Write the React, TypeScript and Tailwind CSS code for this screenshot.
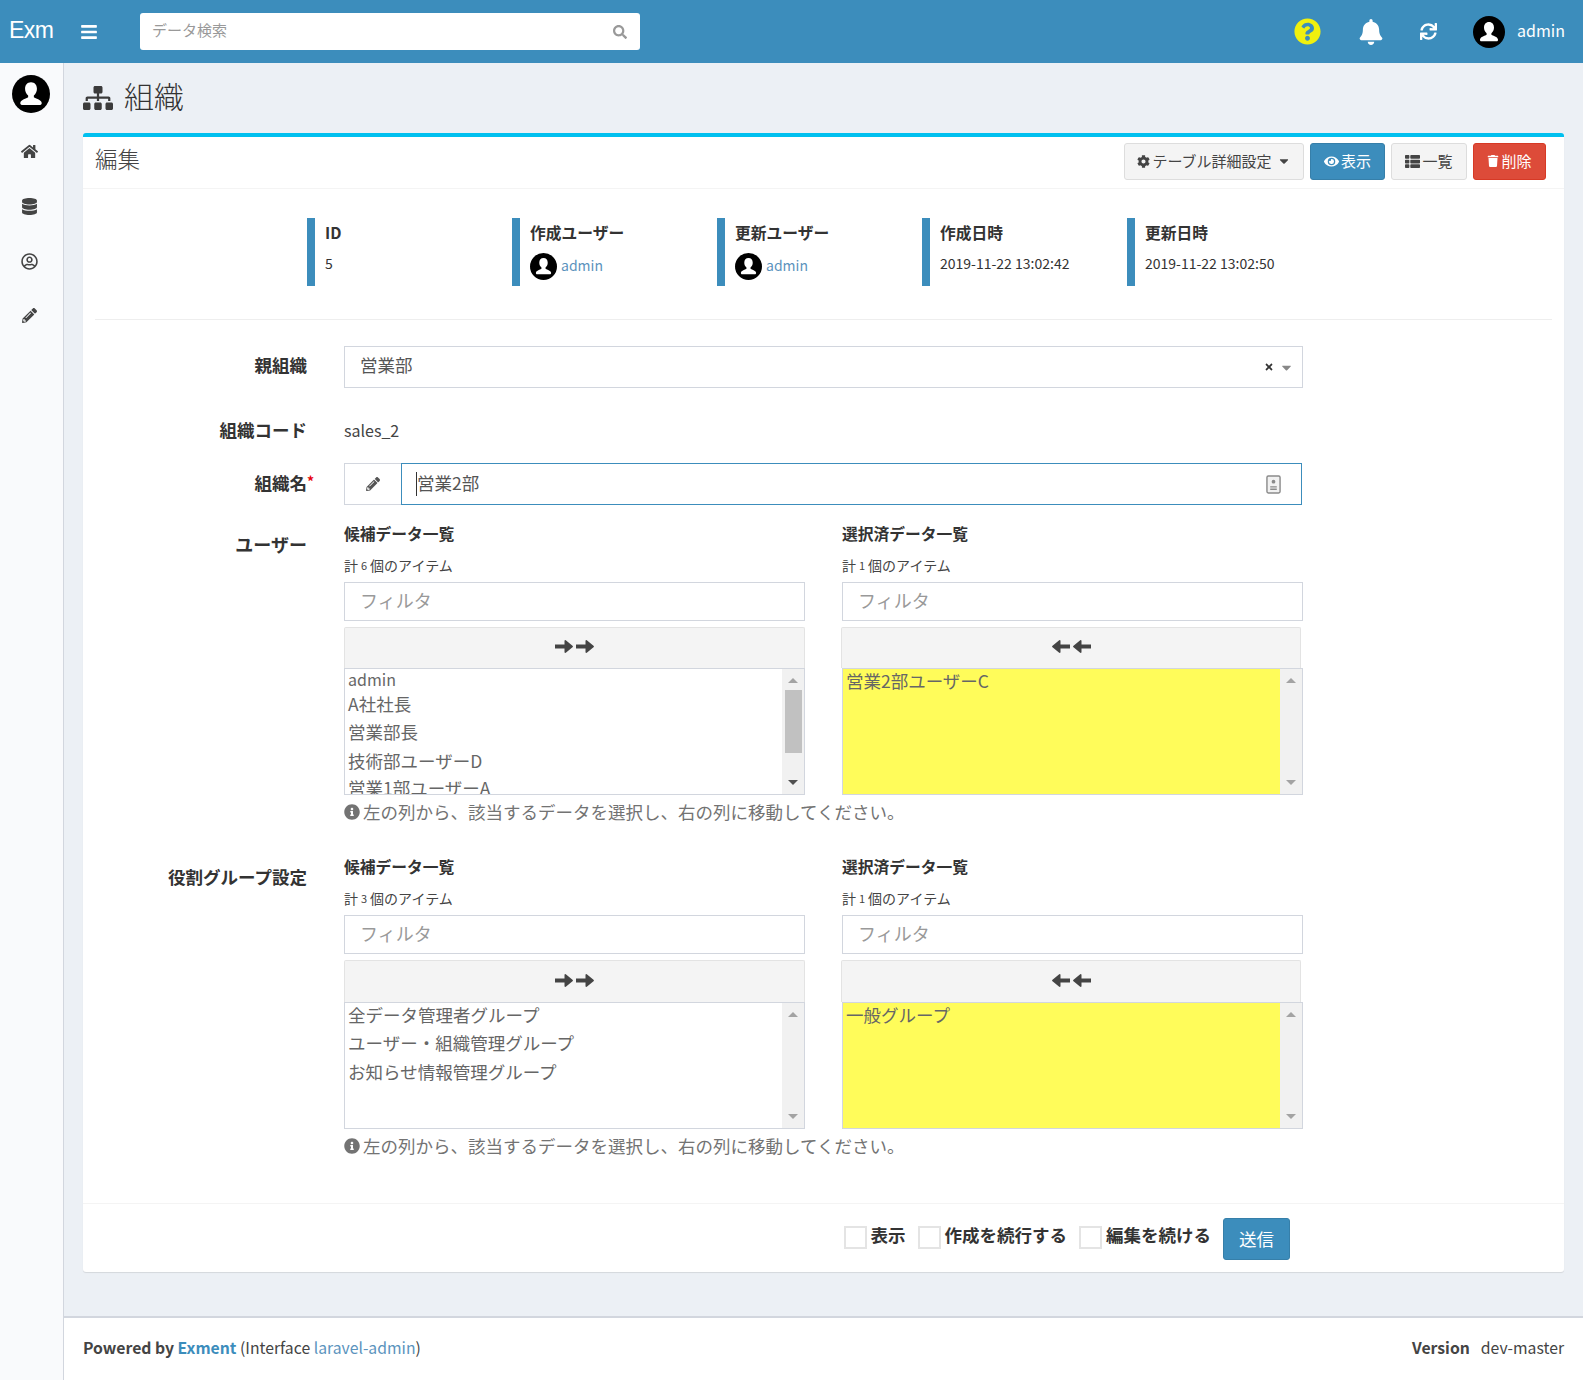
import {
  FaBars,
  FaBell,
  FaCaretDown,
  FaCog,
  FaDatabase,
  FaEye,
  FaHome,
  FaInfoCircle,
  FaPencilAlt,
  FaQuestionCircle,
  FaRegUserCircle,
  FaSearch,
  FaSitemap,
  FaSync,
  FaThList,
  FaTimes,
  FaTrash,
} from "react-icons/fa";

function Avatar({ size }: { size: number }) {
  return (
    <svg viewBox="0 0 32 32" width={size} height={size} className="shrink-0">
      <circle cx="16" cy="16" r="16" fill="#000" />
      <path
        d="M16 6c-3.2 0-5 2.4-5 5.6 0 2.4 1 4.4 2.6 5.6v1.6c-1.6 1.2-6 1.8-6.6 4.6-.2 1 .4 1.8 1.4 1.8h15.2c1 0 1.6-.8 1.4-1.8-.6-2.8-5-3.4-6.6-4.6v-1.6c1.6-1.2 2.6-3.2 2.6-5.6C21 8.400 19.200 6 16 6z"
        fill="#fff"
      />
    </svg>
  );
}

function Arrow({ left }: { left?: boolean }) {
  return (
    <svg viewBox="0 0 18 13" width="18" height="13" className={left ? "rotate-180 fill-[#444]" : "fill-[#444]"}>
      <path d="M0 4.500h9.500V.5L10.500 0 17.500 5.700c.6.500.6 1.100 0 1.600L10.500 13 9.500 12.500v-4H0z" />
    </svg>
  );
}

function InfoItem({ label, children }: { label: string; children: React.ReactNode }) {
  return (
    <div className="flex h-[68px] w-[205px] border-l-[8px] border-[#3c8dbc] pl-[10px]">
      <div className="flex flex-col">
        <div className="mt-[3px] h-[24px] text-[15.75px] leading-[24px] font-bold text-[#333]">{label}</div>
        <div className="mt-[6px] flex h-[30px] items-center text-[14px] text-[#333]">{children}</div>
      </div>
    </div>
  );
}

function AdminLink() {
  return (
    <span className="flex items-center gap-[4px] text-[14px] text-[#5b93bd]">
      <Avatar size={27} />
      <span className="pb-[2px]">admin</span>
    </span>
  );
}

function Scrollbar({ thumb }: { thumb?: boolean }) {
  return (
    <div className="flex w-[22px] shrink-0 flex-col items-center justify-between bg-[#f1f1f1] py-[9px]">
      <div className="h-0 w-0 border-x-[5px] border-b-[5px] border-x-transparent border-b-[#a3a3a3]" />
      {thumb ? <div className="mt-[7px] mb-auto h-[63px] w-[17px] bg-[#c1c1c1]" /> : null}
      <div
        className={
          thumb
            ? "h-0 w-0 border-x-[5px] border-t-[5px] border-x-transparent border-t-[#505050]"
            : "h-0 w-0 border-x-[5px] border-t-[5px] border-x-transparent border-t-[#a3a3a3]"
        }
      />
    </div>
  );
}

type Row = { text: string; h: number };

function DualList({
  title,
  count,
  rows,
  selected,
  thumb,
  tall,
}: {
  title: string;
  count: number;
  rows: Row[];
  selected?: boolean;
  thumb?: boolean;
  tall?: boolean;
}) {
  return (
    <div className="w-[461px]">
      <div className="h-[26px] text-[15.75px] leading-[26px] font-bold text-[#333]">{title}</div>
      <div className="mt-[3px] flex h-[30px] items-center gap-[3px] text-[14px] text-[#444]">
        <span>計</span>
        <span className="text-[11px]">{count}</span>
        <span>個のアイテム</span>
      </div>
      <div className="mt-[2px] flex h-[39px] items-center border border-[#d2d6de] pb-[2px] pl-[15px] text-[18px] text-[#999]">
        フィルタ
      </div>
      <div
        className={
          "mt-[6px] flex items-center justify-center gap-[3px] rounded-t-[2px] border border-b-0 border-[#e3e3e3] bg-[#f4f4f4] pb-[3px] " +
          (tall ? "h-[42px] " : "h-[41px] ") +
          (selected ? "-ml-[1px] w-[460px]" : "")
        }
      >
        <Arrow left={selected} />
        <Arrow left={selected} />
      </div>
      <div className="flex h-[127px] overflow-hidden border border-[#d2d6de]">
        <div
          className={
            selected
              ? "flex-1 overflow-hidden bg-[#fffc5a] px-[3px] text-[17.5px] text-[#666]"
              : "flex-1 overflow-hidden px-[3px] text-[17.5px] text-[#666]"
          }
        >
          {rows.map((row) => (
            <div
              key={row.text}
              className={row.text === "admin" ? "whitespace-nowrap text-[16px]" : "whitespace-nowrap"}
              style={{ height: row.h, lineHeight: `${row.h}px` }}
            >
              {row.text}
            </div>
          ))}
        </div>
        <Scrollbar thumb={thumb} />
      </div>
    </div>
  );
}

function HelpText() {
  return (
    <div className="mt-[7px] flex h-[20px] items-center gap-[3px] text-[17.500px] text-[#737373]">
      <FaInfoCircle size={16} />
      左の列から、該当するデータを選択し、右の列に移動してください。
    </div>
  );
}

function CheckLabel({ label }: { label: string }) {
  return (
    <label className="flex items-center gap-[4px] text-[17.5px] font-bold text-[#333]">
      <span className="-mt-[2px] h-[23px] w-[23px] border-2 border-[#e4e4e4] bg-white" />
      <span className="-mt-[6px]">{label}</span>
    </label>
  );
}

export default function App() {
  return (
    <div className="flex min-h-screen flex-col font-['Noto_Sans_CJK_JP','Noto_Sans',sans-serif] text-[#333]">
      <header className="flex h-[63px] items-center bg-[#3c8dbc] text-white">
        <div className="ml-[9px] w-[71px] pb-[2px] font-['Liberation_Sans',sans-serif] text-[23px] tracking-[-0.5px]">
          Exm
        </div>
        <FaBars size={18} />
        <div className="ml-[42px] flex h-[37px] w-[500px] items-center justify-between rounded-[3px] bg-white px-[12px] text-[15px] text-[#999]">
          <span className="pb-[2px]">データ検索</span>
          <FaSearch size={14} className="mr-[1px]" />
        </div>
        <div className="ml-auto flex items-center">
          <FaQuestionCircle size={27} className="text-[#f0f00e]" />
          <FaBell size={26} className="ml-[37px]" />
          <FaSync size={17} className="ml-[36px]" />
          <span className="ml-[36px]">
            <Avatar size={32} />
          </span>
          <span className="ml-[12px] mr-[18px] pb-[3px] text-[16px]">admin</span>
        </div>
      </header>

      <div className="flex flex-1">
        <aside className="flex w-[64px] shrink-0 flex-col items-center border-r border-[#d2d6de] bg-[#f9fafc] text-[#444]">
          <div className="mt-[12px] -ml-[1px]">
            <Avatar size={38} />
          </div>
          <div className="mt-[30px] -ml-[4px] flex flex-col items-center gap-[38px]">
            <FaHome size={17} />
            <FaDatabase size={17} />
            <FaRegUserCircle size={17} />
            <FaPencilAlt size={15} />
          </div>
        </aside>

        <main className="flex min-w-0 flex-1 flex-col">
          <div className="flex-1 bg-[#ecf0f5] px-[19px] pb-[42px]">
            <div className="flex h-[70px] items-center text-[#333]">
              <FaSitemap size={30} className="text-[#3b3b3b]" />
              <h1 className="ml-[11px] -mt-[6px] text-[30px] font-light">組織</h1>
            </div>

            <div className="rounded-[3px] border-t-4 border-[#00c0ef] bg-white shadow-[0_1px_1px_rgba(0,0,0,0.1)]">
              <div className="flex h-[52px] items-center border-b border-[#f4f4f4] pl-[12px] pr-[18px]">
                <h2 className="pb-[7px] text-[22.5px] font-light text-[#444]">編集</h2>
                <div className="mb-[3px] ml-auto flex h-[37px] gap-[6px] text-[15px]">
                  <button className="flex w-[180px] items-center justify-center gap-[2px] rounded-[3px] border border-[#ddd] bg-[#f4f4f4] text-[#444]">
                    <FaCog size={13} />
                    テーブル詳細設定
                    <FaCaretDown size={14} className="ml-[3px]" />
                  </button>
                  <button className="flex w-[75px] items-center justify-center gap-[2px] rounded-[3px] border border-[#367fa9] bg-[#3c8dbc] text-white">
                    <FaEye size={15} />
                    表示
                  </button>
                  <button className="flex w-[76px] items-center justify-center gap-[2px] rounded-[3px] border border-[#ddd] bg-[#f4f4f4] text-[#444]">
                    <FaThList size={15} />
                    一覧
                  </button>
                  <button className="flex w-[73px] items-center justify-center gap-[2px] rounded-[3px] border border-[#d73925] bg-[#dd4b39] text-white">
                    <FaTrash size={12} />
                    削除
                  </button>
                </div>
              </div>

              <div className="px-[12px]">
                <div className="mt-[29px] flex border-b border-[#eee] pb-[33px] pl-[212px]">
                  <InfoItem label="ID">
                    <span className="mb-[6px]">5</span>
                  </InfoItem>
                  <InfoItem label="作成ユーザー">
                    <AdminLink />
                  </InfoItem>
                  <InfoItem label="更新ユーザー">
                    <AdminLink />
                  </InfoItem>
                  <InfoItem label="作成日時">
                    <span className="mb-[6px]">2019-11-22 13:02:42</span>
                  </InfoItem>
                  <InfoItem label="更新日時">
                    <span className="mb-[6px]">2019-11-22 13:02:50</span>
                  </InfoItem>
                </div>
              </div>

              <div className="pt-[26px] text-[17.5px]">
                <div className="flex">
                  <div className="flex h-[42px] w-[224px] items-center justify-end pb-[3px] font-bold">親組織</div>
                  <div className="ml-[37px] flex h-[42px] w-[959px] items-center border border-[#d2d6de] pl-[15px] pr-[8px] text-[#555]">
                    <span className="pb-[3px]">営業部</span>
                    <FaTimes size={10} className="ml-auto text-[#333]" />
                    <FaCaretDown size={15} className="ml-[5px] text-[#888]" />
                  </div>
                </div>

                <div className="mt-[21px] flex h-[43px] items-center">
                  <div className="w-[224px] text-right font-bold">組織コード</div>
                  <div className="ml-[37px] pb-[2px] text-[16px] text-[#444]">sales_2</div>
                </div>

                <div className="mt-[11px] flex">
                  <div className="flex h-[42px] w-[224px] items-center justify-end pb-[2px] font-bold">組織名</div>
                  <div className="relative ml-[37px] flex h-[42px] w-[958px] text-[#555]">
                    <span className="absolute -left-[37px] top-[8px] text-[14px] font-bold text-red-600">*</span>
                    <div className="flex w-[57px] items-center justify-center border border-r-0 border-[#d2d6de]">
                      <FaPencilAlt size={14} className="text-[#555]" />
                    </div>
                    <div className="flex flex-1 items-center border border-[#3c8dbc] pl-[14px] pr-[20px]">
                      <span className="h-[24px] border-l border-[#333]" />
                      <span className="pb-[2px]">営業2部</span>
                      <svg viewBox="0 0 16 20" width="15" height="19" className="ml-auto text-[#8a8a8a]">
                        <rect x="1" y="1" width="14" height="18" rx="1.500" fill="#f1f1f1" stroke="currentColor" strokeWidth="1.500" />
                        <circle cx="8" cy="7" r="2" fill="currentColor" />
                        <path d="M4.500 12.500h7M4.500 15h7" stroke="currentColor" strokeWidth="1.500" />
                      </svg>
                    </div>
                  </div>
                </div>

                <div className="mt-[16px] flex">
                  <div className="mt-[8px] w-[224px] text-right text-[18px] font-bold leading-[30px]">ユーザー</div>
                  <div className="ml-[37px] w-[959px]">
                    <div className="flex justify-between">
                      <DualList
                        title="候補データ一覧"
                        count={6}
                        thumb
                        rows={[
                          { text: "admin", h: 20 },
                          { text: "A社社長", h: 29 },
                          { text: "営業部長", h: 27 },
                          { text: "技術部ユーザーD", h: 31 },
                          { text: "営業1部ユーザーA", h: 23 },
                        ]}
                      />
                      <DualList title="選択済データ一覧" count={1} selected rows={[{ text: "営業2部ユーザーC", h: 23 }]} />
                    </div>
                    <HelpText />
                  </div>
                </div>

                <div className="mt-[32px] flex">
                  <div className="mt-[8px] w-[224px] text-right font-bold leading-[30px]">役割グループ設定</div>
                  <div className="ml-[37px] w-[959px]">
                    <div className="flex justify-between">
                      <DualList
                        title="候補データ一覧"
                        count={3}
                        tall
                        rows={[
                          { text: "全データ管理者グループ", h: 24 },
                          { text: "ユーザー・組織管理グループ", h: 31 },
                          { text: "お知らせ情報管理グループ", h: 27 },
                        ]}
                      />
                      <DualList title="選択済データ一覧" count={1} selected tall rows={[{ text: "一般グループ", h: 24 }]} />
                    </div>
                    <HelpText />
                  </div>
                </div>

                <div className="mt-[47px] flex h-[69px] items-center justify-end gap-[12px] border-t border-[#f4f4f4] pr-[274px]">
                  <CheckLabel label="表示" />
                  <CheckLabel label="作成を続行する" />
                  <CheckLabel label="編集を続ける" />
                  <button className="mt-[2px] h-[42px] w-[67px] rounded-[3px] border border-[#367fa9] bg-[#3c8dbc] text-white">
                    送信
                  </button>
                </div>
              </div>
            </div>
          </div>

          <footer className="flex h-[64px] items-center justify-between border-t-2 border-[#d2d6de] bg-white px-[19px] pb-[3px] text-[15.75px] text-[#444]">
            <div>
              <b>Powered by</b> <b className="text-[#3c8dbc]">Exment</b> (Interface{" "}
              <span className="text-[#5b93bd]">laravel-admin</span>)
            </div>
            <div>
              <b>Version</b>
              <span className="ml-[11px]">dev-master</span>
            </div>
          </footer>
        </main>
      </div>
    </div>
  );
}
